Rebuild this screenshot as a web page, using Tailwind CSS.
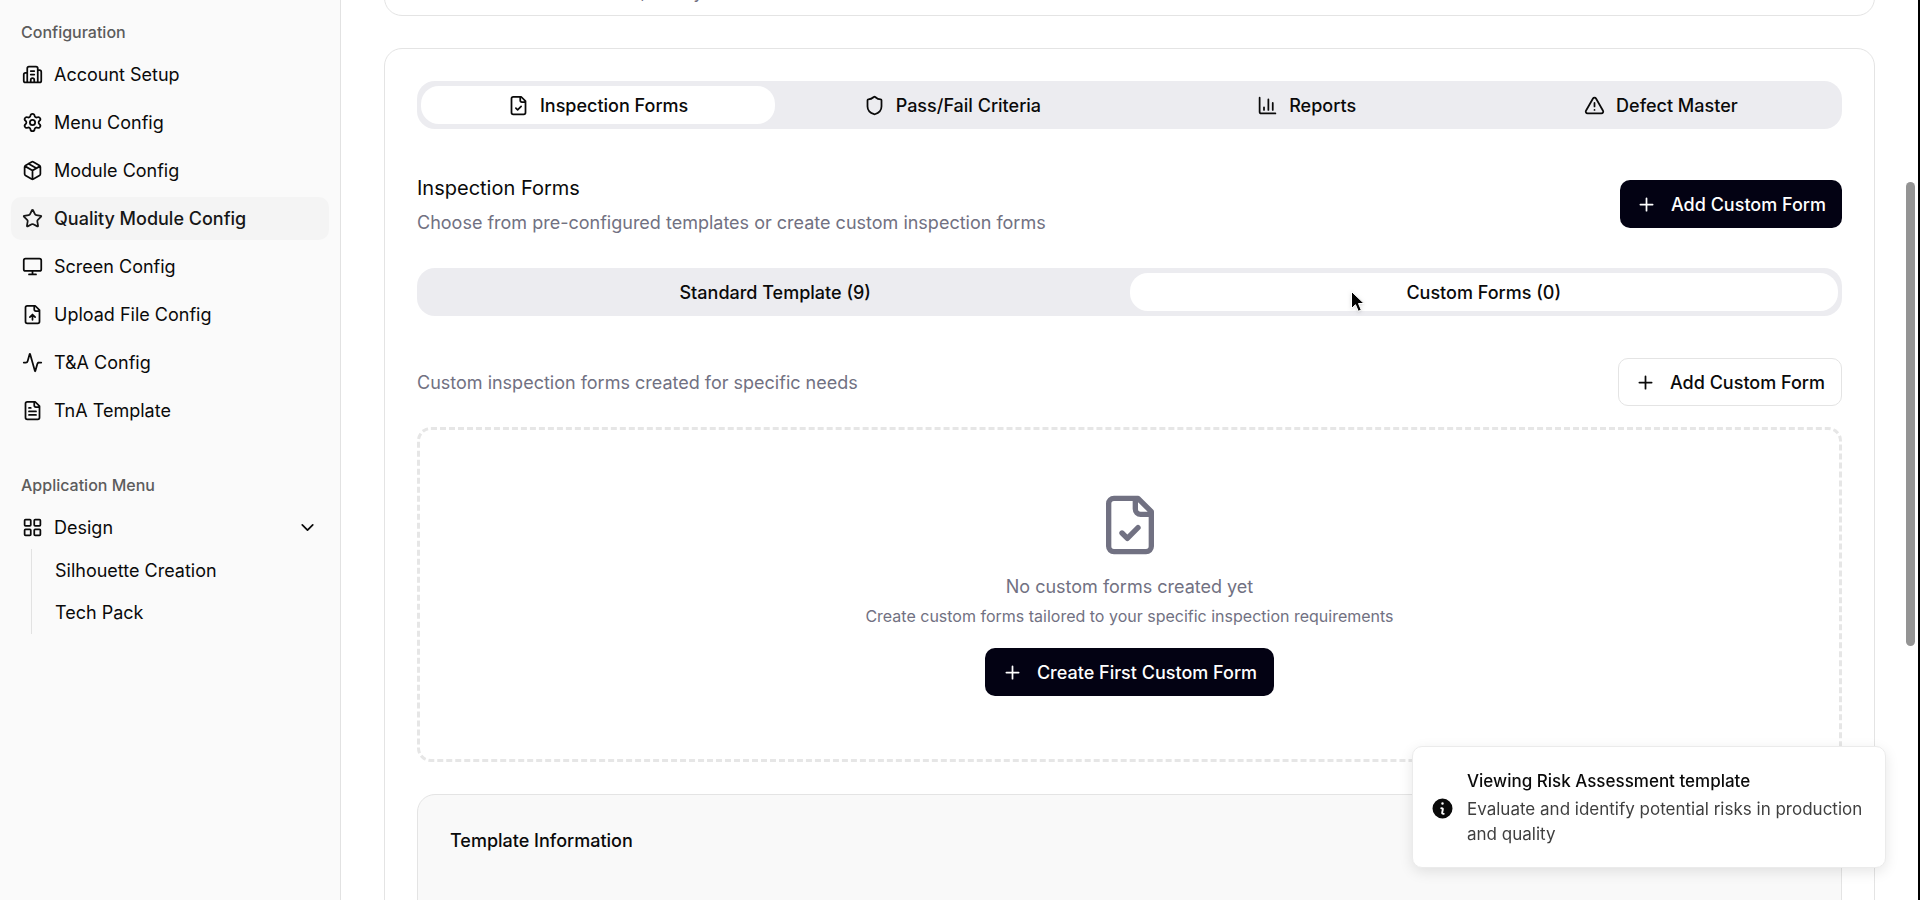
<!DOCTYPE html>
<html lang="en">
<head>
    <meta charset="UTF-8">
    <meta name="viewport" content="width=device-width, initial-scale=1.0">
    <title>Quality Module Config</title>
    <script src="https://cdn.jsdelivr.net/npm/@tailwindcss/browser@4"></script>
</head>
<body class="bg-white font-['Inter',sans-serif] text-[18px] leading-[27px] text-[#0a0a0a]">
    <!-- Icons -->
    <svg class="hidden">
        <symbol id="building" viewBox="0 0 24 24"><path d="M10 12h4M10 8h4M14 21v-3a2 2 0 0 0-4 0v3M6 10H4a2 2 0 0 0-2 2v7a2 2 0 0 0 2 2h16a2 2 0 0 0 2-2V9a2 2 0 0 0-2-2h-2M6 21V5a2 2 0 0 1 2-2h8a2 2 0 0 1 2 2v16"/></symbol>
        <symbol id="settings" viewBox="0 0 24 24"><path d="M9.671 4.136a2.34 2.34 0 0 1 4.659 0 2.34 2.34 0 0 0 3.319 1.915 2.34 2.34 0 0 1 2.33 4.033 2.34 2.34 0 0 0 0 3.831 2.34 2.34 0 0 1-2.33 4.033 2.34 2.34 0 0 0-3.319 1.915 2.34 2.34 0 0 1-4.659 0 2.34 2.34 0 0 0-3.32-1.915 2.34 2.34 0 0 1-2.33-4.033 2.34 2.34 0 0 0 0-3.831A2.34 2.34 0 0 1 6.35 6.051a2.34 2.34 0 0 0 3.319-1.915"/><circle cx="12" cy="12" r="3"/></symbol>
        <symbol id="package" viewBox="0 0 24 24"><path d="M11 21.73a2 2 0 0 0 2 0l7-4A2 2 0 0 0 21 16V8a2 2 0 0 0-1-1.73l-7-4a2 2 0 0 0-2 0l-7 4A2 2 0 0 0 3 8v8a2 2 0 0 0 1 1.73zM12 22V12M3.29 7 12 12l8.71-5M7.5 4.27l9 5.15"/></symbol>
        <symbol id="star" viewBox="0 0 24 24"><path d="M11.525 2.295a.53.53 0 0 1 .95 0l2.31 4.679a2.123 2.123 0 0 0 1.595 1.16l5.166.756a.53.53 0 0 1 .294.904l-3.736 3.638a2.123 2.123 0 0 0-.611 1.878l.882 5.14a.53.53 0 0 1-.771.56l-4.618-2.428a2.122 2.122 0 0 0-1.973 0L6.396 21.01a.53.53 0 0 1-.77-.56l.881-5.139a2.122 2.122 0 0 0-.611-1.879L2.16 9.795a.53.53 0 0 1 .294-.906l5.165-.755a2.122 2.122 0 0 0 1.597-1.16z"/></symbol>
        <symbol id="monitor" viewBox="0 0 24 24"><rect width="20" height="14" x="2" y="3" rx="2"/><path d="M8 21h8M12 17v4"/></symbol>
        <symbol id="file-up" viewBox="0 0 24 24"><path d="M15 2H6a2 2 0 0 0-2 2v16a2 2 0 0 0 2 2h12a2 2 0 0 0 2-2V7ZM14 2v4a2 2 0 0 0 2 2h4M12 12v6M15 15l-3-3-3 3"/></symbol>
        <symbol id="activity" viewBox="0 0 24 24"><path d="M22 12h-2.48a2 2 0 0 0-1.93 1.46l-2.35 8.36a.25.25 0 0 1-.48 0L9.24 2.18a.25.25 0 0 0-.48 0l-2.35 8.36A2 2 0 0 1 4.49 12H2"/></symbol>
        <symbol id="file-text" viewBox="0 0 24 24"><path d="M15 2H6a2 2 0 0 0-2 2v16a2 2 0 0 0 2 2h12a2 2 0 0 0 2-2V7ZM14 2v4a2 2 0 0 0 2 2h4M10 9H8M16 13H8M16 17H8"/></symbol>
        <symbol id="grid" viewBox="0 0 24 24"><rect width="7" height="7" x="3" y="3" rx="1"/><rect width="7" height="7" x="14" y="3" rx="1"/><rect width="7" height="7" x="14" y="14" rx="1"/><rect width="7" height="7" x="3" y="14" rx="1"/></symbol>
        <symbol id="chevron-down" viewBox="0 0 24 24"><path d="m6 9 6 6 6-6"/></symbol>
        <symbol id="file-check" viewBox="0 0 24 24"><path d="M15 2H6a2 2 0 0 0-2 2v16a2 2 0 0 0 2 2h12a2 2 0 0 0 2-2V7ZM14 2v4a2 2 0 0 0 2 2h4M9 15l2 2 4-4"/></symbol>
        <symbol id="shield" viewBox="0 0 24 24"><path d="M20 13c0 5-3.5 7.5-7.66 8.95a1 1 0 0 1-.67-.01C7.5 20.5 4 18 4 13V6a1 1 0 0 1 1-1c2 0 4.5-1.2 6.24-2.72a1.17 1.17 0 0 1 1.52 0C14.51 3.81 17 5 19 5a1 1 0 0 1 1 1z"/></symbol>
        <symbol id="chart" viewBox="0 0 24 24"><path d="M3 3v16a2 2 0 0 0 2 2h16M18 17V9M13 17V5M8 17v-3"/></symbol>
        <symbol id="alert" viewBox="0 0 24 24"><path d="m21.73 18-8-14a2 2 0 0 0-3.48 0l-8 14A2 2 0 0 0 4 21h16a2 2 0 0 0 1.73-3M12 9v4M12 17h.01"/></symbol>
        <symbol id="plus" viewBox="0 0 24 24"><path d="M5 12h14M12 5v14"/></symbol>
    </svg>

    <div class="flex h-screen overflow-hidden border-r-2 border-black">
        <!-- Sidebar -->
        <aside class="flex w-[341px] shrink-0 flex-col border-r border-[#e2e2e2] bg-[#fafafa] px-[11px] pt-[11px] [&_svg]:size-[21px] [&_svg]:shrink-0 [&_svg]:fill-none [&_svg]:stroke-current [&_svg]:stroke-2">
            <h2 class="flex h-[42px] items-center px-[10px] text-[16px] font-medium text-[#5c5c5c]">Configuration</h2>
            <nav class="flex flex-col gap-[5px] [&_svg]:[stroke-linecap:round] [&_svg]:[stroke-linejoin:round]">
                <a href="#" class="flex h-[43px] items-center gap-[11px] rounded-[10px] px-[11px]"><svg><use href="#building"/></svg>Account Setup</a>
                <a href="#" class="flex h-[43px] items-center gap-[11px] rounded-[10px] px-[11px]"><svg><use href="#settings"/></svg>Menu Config</a>
                <a href="#" class="flex h-[43px] items-center gap-[11px] rounded-[10px] px-[11px]"><svg><use href="#package"/></svg>Module Config</a>
                <a href="#" class="flex h-[43px] items-center gap-[11px] rounded-[10px] bg-[#f4f4f4] px-[11px] font-medium text-[#171717]"><svg><use href="#star"/></svg>Quality Module Config</a>
                <a href="#" class="flex h-[43px] items-center gap-[11px] rounded-[10px] px-[11px]"><svg><use href="#monitor"/></svg>Screen Config</a>
                <a href="#" class="flex h-[43px] items-center gap-[11px] rounded-[10px] px-[11px]"><svg><use href="#file-up"/></svg>Upload File Config</a>
                <a href="#" class="flex h-[43px] items-center gap-[11px] rounded-[10px] px-[11px]"><svg><use href="#activity"/></svg>T&amp;A Config</a>
                <a href="#" class="flex h-[43px] items-center gap-[11px] rounded-[10px] px-[11px]"><svg><use href="#file-text"/></svg>TnA Template</a>
            </nav>

            <h2 class="mt-8 flex h-[42px] items-center px-[10px] text-[16px] font-medium text-[#5c5c5c]">Application Menu</h2>
            <nav class="[&_svg]:[stroke-linecap:round] [&_svg]:[stroke-linejoin:round]">
                <button type="button" class="flex h-[43px] w-full items-center gap-[11px] px-[11px] text-left">
                    <svg><use href="#grid"/></svg>
                    <span class="grow">Design</span>
                    <svg><use href="#chevron-down"/></svg>
                </button>
                <div class="ml-5 flex flex-col gap-[5px] border-l border-[#e2e2e2] py-[3px] pl-[23px]">
                    <a href="#" class="flex h-[37px] items-center">Silhouette Creation</a>
                    <a href="#" class="flex h-[37px] items-center">Tech Pack</a>
                </div>
            </nav>
        </aside>

        <!-- Main content -->
        <main class="grow overflow-hidden px-[43px] [&_svg]:fill-none [&_svg]:stroke-current [&_svg]:stroke-2 [&_svg]:[stroke-linecap:round] [&_svg]:[stroke-linejoin:round]">
            <div class="-mt-[55px] rounded-[18px] border border-[#e4e4e4] px-8 pb-[10px] pt-8 text-[#717182]">
                <p>Customize the audit forms, safety</p>
            </div>

            <section class="mt-8 rounded-[18px] border border-[#e4e4e4] p-8">
                <div role="tablist" class="grid h-12 grid-cols-4 rounded-[18px] bg-[#ececf0] px-1 py-[5px] font-medium [&_svg]:size-[21px]">
                    <button type="button" role="tab" aria-selected="true" class="flex items-center justify-center gap-[11px] rounded-[18px] bg-white"><svg><use href="#file-check"/></svg>Inspection Forms</button>
                    <button type="button" role="tab" class="flex items-center justify-center gap-[11px]"><svg><use href="#shield"/></svg>Pass/Fail Criteria</button>
                    <button type="button" role="tab" class="flex items-center justify-center gap-[11px]"><svg><use href="#chart"/></svg>Reports</button>
                    <button type="button" role="tab" class="flex items-center justify-center gap-[11px]"><svg><use href="#alert"/></svg>Defect Master</button>
                </div>

                <div class="mt-[43px] flex items-center justify-between">
                    <div class="flex flex-col gap-[5px]">
                        <h1 class="text-[20px] leading-8">Inspection Forms</h1>
                        <p class="text-[#717182]">Choose from pre-configured templates or create custom inspection forms</p>
                    </div>
                    <button type="button" class="flex h-12 items-center gap-[14px] rounded-[10px] bg-[#030213] px-4 font-medium text-white"><svg class="size-[21px]"><use href="#plus"/></svg>Add Custom Form</button>
                </div>

                <div role="tablist" class="mt-8 grid h-12 grid-cols-2 rounded-[18px] bg-[#ececf0] px-1 py-[5px] font-medium">
                    <button type="button" role="tab">Standard Template (9)</button>
                    <button type="button" role="tab" aria-selected="true" class="rounded-[18px] bg-white">Custom Forms (0)</button>
                </div>

                <div class="mt-[42px] flex items-center justify-between">
                    <p class="text-[#717182]">Custom inspection forms created for specific needs</p>
                    <button type="button" class="flex h-12 items-center gap-[14px] rounded-[10px] border border-[#e4e4e4] px-4 font-medium"><svg class="size-[21px]"><use href="#plus"/></svg>Add Custom Form</button>
                </div>

                <div class="mt-[21px] flex flex-col items-center rounded-[14px] border-3 border-dashed border-[#e6e6e6] py-[63px] text-[#717182]">
                    <svg class="size-16"><use href="#file-check"/></svg>
                    <p class="mt-4">No custom forms created yet</p>
                    <p class="mt-1 text-[16px] leading-6">Create custom forms tailored to your specific inspection requirements</p>
                    <button type="button" class="mt-5 flex h-12 items-center gap-[14px] rounded-[10px] bg-[#030213] px-[17px] font-medium text-white"><svg class="size-[21px]"><use href="#plus"/></svg>Create First Custom Form</button>
                </div>

                <div class="mt-8 h-60 rounded-[18px] border border-[#e4e4e4] bg-[#f9f9f9] p-8">
                    <h2 class="font-medium">Template Information</h2>
                </div>
            </section>
        </main>
    </div>

    <!-- Scrollbar thumb -->
    <div class="fixed right-[5px] top-[182px] h-[464px] w-[9px] rounded-full bg-[#949494]"></div>

    <!-- Toast -->
    <div role="status" class="fixed bottom-8 right-[34px] flex w-[474px] items-center gap-3 rounded-[10px] border border-[#ebebeb] bg-white pb-5 pl-[17px] pr-5 pt-[22px] shadow-[0_4px_14px_rgba(0,0,0,0.1)]">
        <svg class="size-[25px] shrink-0" viewBox="0 0 20 20" fill="#0a0a0a"><path fill-rule="evenodd" d="M18 10a8 8 0 1 1-16 0 8 8 0 0 1 16 0Zm-7-4a1 1 0 1 1-2 0 1 1 0 0 1 2 0ZM9 9a.75.75 0 0 0 0 1.5h.253a.25.25 0 0 1 .244.304l-.459 2.066A1.75 1.75 0 0 0 10.747 15H11a.75.75 0 0 0 0-1.5h-.253a.25.25 0 0 1-.244-.304l.459-2.066A1.75 1.75 0 0 0 9.253 9H9Z" clip-rule="evenodd"/></svg>
        <div class="flex flex-col gap-[3px] text-[17px] leading-[25px]">
            <div class="font-medium">Viewing Risk Assessment template</div>
            <div class="text-[#3f3f3f]">Evaluate and identify potential risks in production and quality</div>
        </div>
    </div>

    <!-- Mouse pointer -->
    <svg class="pointer-events-none fixed left-[1350px] top-[290px] h-6 w-4 drop-shadow" viewBox="0 0 16 24"><path d="M1.500 1.500v17l4-3.800 2.800 6.600 3-1.300-2.800-6.500h5.500z" fill="#000" stroke="#fff"/></svg>
</body>
</html>
